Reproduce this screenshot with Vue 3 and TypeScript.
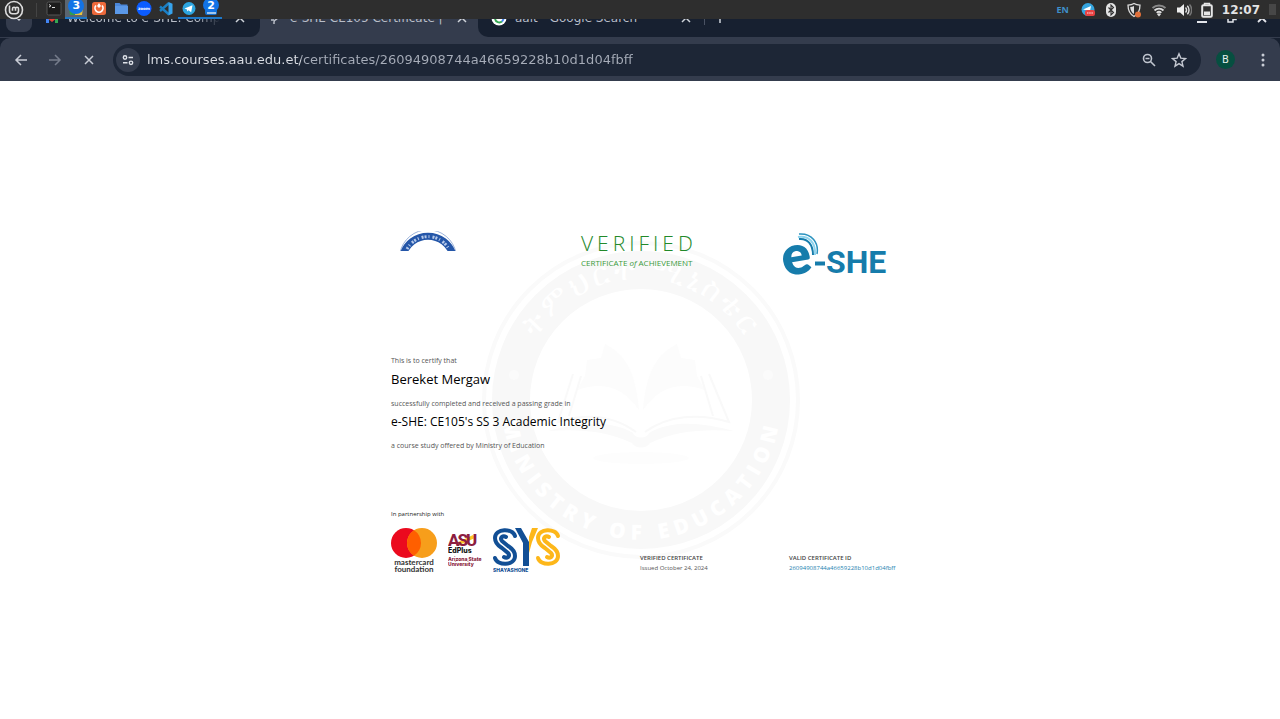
<script setup lang="ts">
import { ref } from 'vue'

const address = ref('lms.courses.aau.edu.et/certificates/26094908744a46659228b10d1d04fbff')
const certificateId = '26094908744a46659228b10d1d04fbff'
</script>

<template>
  <div class="desktop">
    <header class="panel">
      <button class="panel-btn mint" aria-label="Menu">
        <svg viewBox="0 0 20 20" width="20" height="20" fill="none" stroke="#dcdcdc">
          <circle cx="10" cy="10" r="8.500" stroke-width="1.600" />
          <path d="M5.500 5.500v5.200a3 3 0 0 0 3 3h3a3 3 0 0 0 3-3V8.800a1.500 1.500 0 0 0-3 0v2M11.500 10.500V8.800a1.500 1.500 0 0 0-3 0v2" stroke-width="1.600" />
        </svg>
      </button>
      <span class="panel-sep"></span>
      <nav class="tasks" aria-label="Running applications">
        <button class="panel-btn" aria-label="Terminal">
          <svg viewBox="0 0 22 19" width="22" height="19">
            <rect x="4" y="2" width="14" height="13" rx="1.500" fill="#1c1c1c" stroke="#555" />
            <path d="M6 4.500l2 1.300-2 1.300M9 7.500h3" stroke="#ddd" fill="none" />
          </svg>
        </button>
        <button class="panel-btn open focused" aria-label="Chrome, 3 windows">
          <svg viewBox="0 0 22 19" width="22" height="19">
            <path d="M4 8h7v7H5z" fill="#2f9e4f" /><path d="M11 8h7l-1 7h-7z" fill="#e9c23a" />
          </svg>
          <span class="badge">3</span>
        </button>
        <button class="panel-btn" aria-label="Postman">
          <svg viewBox="0 0 22 19" width="22" height="19">
            <rect x="4" y="2" width="14" height="13" rx="2.500" fill="#ee6a3b" />
            <path d="M8 5.500a4 4 0 1 0 6 0" fill="none" stroke="#fff" stroke-width="1.700" />
            <path d="M11 3l2 3-2 2-2-2z" fill="#fff" />
          </svg>
        </button>
        <button class="panel-btn" aria-label="Files">
          <svg viewBox="0 0 22 19" width="22" height="19">
            <path d="M5 3h4.500l1.500 1.500h6.500v9.500H5z" fill="#4a86d8" /><path d="M5 6h13v8H5z" fill="#5b98e6" />
          </svg>
        </button>
        <button class="panel-btn" aria-label="Zoom">
          <svg viewBox="0 0 22 19" width="22" height="19">
            <circle cx="11" cy="8.500" r="7.500" fill="#0b5cff" />
            <text x="11" y="10" text-anchor="middle" font-size="4" font-weight="700" fill="#fff">zoom</text>
          </svg>
        </button>
        <button class="panel-btn" aria-label="Visual Studio Code">
          <svg viewBox="0 0 22 19" width="22" height="19">
            <path d="M14 3L5 11M5 6.500l9 8" stroke="#1b7fc4" stroke-width="2.400" fill="none" />
            <path d="M13.500 2l4 1.800v9.800l-4 1.800z" fill="#36a3ec" />
          </svg>
        </button>
        <button class="panel-btn open" aria-label="Telegram">
          <svg viewBox="0 0 22 19" width="22" height="19">
            <circle cx="11" cy="8.500" r="6.500" fill="#2ca5e0" />
            <path d="M6.500 8.500l8-3.300-1.300 7-2.700-1.900-1.300 1.300-.2-2.200z" fill="#fff" />
          </svg>
        </button>
        <button class="panel-btn open" aria-label="Text editor, 2 windows">
          <svg viewBox="0 0 22 19" width="22" height="19">
            <rect x="5" y="4" width="12" height="11" rx="2" fill="#1670cf" />
            <path d="M7 13h9" stroke="#fff" stroke-width="1.200" />
          </svg>
          <span class="badge clear">2</span>
        </button>
      </nav>
      <div class="tray">
        <span class="lang">EN</span>
        <svg viewBox="0 0 16 16" width="16" height="16" role="img" aria-label="Telegram notifications">
          <circle cx="8" cy="7.500" r="6.500" fill="#35a5df" />
          <path d="M3 7.500l8-3.500-1 5z" fill="#fff" />
          <rect x="5" y="8" width="10" height="6" rx="2" fill="#ea4141" />
          <path d="M7 11h6" stroke="#f9b0b0" stroke-width="1.500" stroke-dasharray="1.500 .7" />
        </svg>
        <svg viewBox="0 0 12 16" width="12" height="16" role="img" aria-label="Bluetooth">
          <rect x="1" y="1" width="10" height="14" rx="5" fill="#e4e4e4" />
          <path d="M3.500 5.500l5 5L6 13V3l2.500 2.500-5 5" fill="none" stroke="#2e2e2e" stroke-width="1.100" />
        </svg>
        <svg viewBox="0 0 16 16" width="16" height="16" role="img" aria-label="Updates available">
          <path d="M8 1.500c2 1.300 4 1.600 6 1.600 0 5-1.500 9-6 11.400C3.500 12 2 8 2 3.100c2 0 4-.3 6-1.600z" fill="#2e2e2e" stroke="#ddd" stroke-width="1.300" />
          <path d="M8 4v8c-2.500-1.500-3.600-4-3.800-7 1.300 0 2.600-.3 3.800-1z" fill="#ddd" />
          <circle cx="12" cy="12.500" r="3" fill="#e2703a" />
        </svg>
        <svg viewBox="0 0 16 16" width="16" height="16" fill="none" stroke="#ddd" role="img" aria-label="Wi-Fi">
          <path d="M1.500 6a9.500 9.500 0 0 1 13 0" stroke="#8a8a8a" stroke-width="1.900" />
          <path d="M3.500 8.500a6.300 6.300 0 0 1 9 0M5.700 10.800a3.400 3.400 0 0 1 4.600 0" stroke-width="1.800" />
          <path d="M8 14.500l-2-2.300a3 3 0 0 1 4 0z" fill="#ddd" stroke="none" />
        </svg>
        <svg viewBox="0 0 16 16" width="16" height="16" fill="none" stroke="#ddd" role="img" aria-label="Volume">
          <path d="M1 5.500h3L8 2v12L4 10.500H1z" fill="#eee" stroke="none" />
          <path d="M9.500 5.500a3.500 3.500 0 0 1 0 5M11.300 3.800a6 6 0 0 1 0 8.400" stroke-width="1.500" />
          <path d="M13.500 2.500a8 8 0 0 1 0 11" stroke="#777" stroke-width="1.500" />
        </svg>
        <svg viewBox="0 0 12 16" width="12" height="16" fill="none" role="img" aria-label="Battery">
          <path d="M3.500 3V1.500h5V3" stroke="#e6e6e6" stroke-width="1.500" />
          <rect x="1.200" y="3.300" width="9.600" height="11.400" rx="1" stroke="#e6e6e6" stroke-width="2" />
          <rect x="3" y="9.500" width="6" height="3.700" fill="#e6e6e6" />
        </svg>
        <time class="clock">12:07</time>
        <span class="corner"></span>
      </div>
    </header>

    <section class="browser">
      <div class="tabstrip">
        <div class="tab first">
          <button class="tab-search" aria-label="Search tabs">
            <svg viewBox="0 0 12 12" width="12" height="12"><path d="M3 5l3 3 3-3" fill="none" stroke="#cfd3da" stroke-width="1.500" /></svg>
          </button>
          <svg class="fav" viewBox="0 0 14 14" width="14" height="14">
            <path d="M1 3v9h3V7z" fill="#4285f4" /><path d="M10 7v5h3V3z" fill="#34a853" /><path d="M1 3l6 5 6-5v3l-6 5-6-5z" fill="#ea4335" />
          </svg>
          <span class="tab-title fade">Welcome to e-SHE: Comp</span>
          <button class="tab-close" aria-label="Close tab"><svg viewBox="0 0 10 10" width="10" height="10"><path d="M1 1l8 8M9 1l-8 8" stroke="#cfd3da" stroke-width="1.500" /></svg></button>
        </div>
        <div class="tab active">
          <svg class="fav" viewBox="0 0 14 14" width="14" height="14" fill="none" stroke="#b9bec8">
            <path d="M4 3a4 4 0 0 1 6 3c0 3-4 2-4 5M3 9h3" stroke-width="1.500" /><circle cx="6" cy="12" r=".7" />
          </svg>
          <span class="tab-title">e-SHE CE105 Certificate |</span>
          <button class="tab-close" aria-label="Close tab"><svg viewBox="0 0 10 10" width="10" height="10"><path d="M1 1l8 8M9 1l-8 8" stroke="#cfd3da" stroke-width="1.500" /></svg></button>
        </div>
        <div class="tab last">
          <svg class="fav" viewBox="0 0 16 16" width="16" height="16" fill="none">
            <circle cx="8" cy="8" r="7.500" fill="#fff" />
            <path d="M4 9a4.500 4.500 0 0 0 7 2.500" stroke="#34a853" stroke-width="2" /><path d="M8.500 8h4a4.500 4.500 0 0 1-1.500 3.500" stroke="#4285f4" stroke-width="2" />
          </svg>
          <span class="tab-title">aait - Google Search</span>
          <button class="tab-close" aria-label="Close tab"><svg viewBox="0 0 10 10" width="10" height="10"><path d="M1 1l8 8M9 1l-8 8" stroke="#cfd3da" stroke-width="1.500" /></svg></button>
          <span class="tab-sep"></span>
          <button class="tab-close" aria-label="New tab"><svg viewBox="0 0 10 10" width="10" height="10"><path d="M5 0v10M0 5h10" stroke="#cfd3da" stroke-width="1.500" /></svg></button>
          <div class="win">
            <button aria-label="Minimize"><svg viewBox="0 0 10 10" width="10" height="10"><path d="M0 9h10" stroke="#e3e5ea" stroke-width="2" /></svg></button>
            <button aria-label="Restore"><svg viewBox="0 0 10 10" width="10" height="10" fill="none" stroke="#e3e5ea" stroke-width="1.500"><path d="M1 3h5v6H1zM3 1h6v5.500H6" /></svg></button>
            <button aria-label="Close"><svg viewBox="0 0 10 10" width="10" height="10"><path d="M1 1l8 8M9 1l-8 8" stroke="#e3e5ea" stroke-width="1.800" /></svg></button>
          </div>
        </div>
      </div>
      <div class="toolbar">
        <button class="tool" aria-label="Back"><svg viewBox="0 0 14 14" width="14" height="14" fill="none" stroke="#c9cdd6" stroke-width="1.500"><path d="M13 7H2M7 2L2 7l5 5" /></svg></button>
        <button class="tool" aria-label="Forward"><svg viewBox="0 0 14 14" width="14" height="14" fill="none" stroke="#757c8b" stroke-width="1.500"><path d="M1 7h11M7 2l5 5-5 5" /></svg></button>
        <button class="tool" aria-label="Stop loading"><svg viewBox="0 0 14 14" width="14" height="14" fill="none" stroke="#c9cdd6" stroke-width="1.500"><path d="M3 3l8 8M11 3l-8 8" /></svg></button>
        <div class="omnibox">
          <button class="site" aria-label="Site information">
            <svg viewBox="0 0 14 14" width="14" height="14" fill="none" stroke="#dfe2e8" stroke-width="1.400"><circle cx="4" cy="4.500" r="1.700" /><path d="M7.500 4.500H12M2 9.800h4.500" /><circle cx="10" cy="9.800" r="1.700" /></svg>
          </button>
          <input v-model="address" class="url" type="text" aria-label="Address" spellcheck="false" />
          <button class="omni-btn" aria-label="Zoom out"><svg viewBox="0 0 16 16" width="16" height="16" fill="none" stroke="#bfc4ce" stroke-width="1.600"><circle cx="6.500" cy="6.500" r="4" /><path d="M9.500 9.500l4.500 4.500M4.500 6.500h4" /></svg></button>
          <button class="omni-btn" aria-label="Bookmark"><svg viewBox="0 0 16 16" width="16" height="16" fill="none" stroke="#c5c9d2" stroke-width="1.400"><path d="M8 1.800l1.800 4.300 4.700.4-3.600 3.100 1.100 4.600L8 11.700l-4 2.500 1.100-4.600-3.600-3.100 4.700-.4z" /></svg></button>
        </div>
        <button class="avatar" aria-label="Profile">B</button>
        <button class="tool more" aria-label="More"><svg viewBox="0 0 4 16" width="4" height="16" fill="#c9cdd6"><circle cx="2" cy="3" r="1.500" /><circle cx="2" cy="8" r="1.500" /><circle cx="2" cy="13" r="1.500" /></svg></button>
      </div>
    </section>

    <main class="page">
      <article class="cert">
        <svg class="seal" viewBox="0 0 320 320" width="320" height="320" aria-hidden="true">
          <defs>
            <path id="sealTop" d="M39 160a121 121 0 0 1 242 0" />
            <path id="sealBottom" d="M20 160a140 140 0 0 0 280 0" />
          </defs>
          <circle cx="160" cy="160" r="157" fill="none" stroke="#fafafa" stroke-width="4" />
          <circle cx="160" cy="160" r="130" fill="none" stroke="#f8f8f8" stroke-width="38" />
          <text font-size="31" fill="#fff" letter-spacing="3"><textPath href="#sealTop" startOffset="50%" text-anchor="middle">ትምህርት ሚኒስቴር</textPath></text>
          <text font-size="21" font-weight="800" fill="#fff" letter-spacing="6"><textPath href="#sealBottom" startOffset="50%" text-anchor="middle">MINISTRY OF EDUCATION</textPath></text>
          <circle cx="33" cy="135" r="5" fill="#fbfbfb" />
          <circle cx="287" cy="135" r="5" fill="#fbfbfb" />
          <g fill="#fcfcfc">
            <path d="M104 136l2-16 14-2 4-14c20 10 31 28 34 66-14-20-32-30-62-20z" />
            <path d="M216 136l-2-16-14-2-4-14c-20 10-31 28-34 66 14-20 32-30 62-20z" />
          </g>
          <path d="M92 134l-15 48c28-9 55-7 78 10M228 134l20 48c-30-9-61-7-84 10M100 136l-12 40M220 136l12 40" fill="none" stroke="#f9f9f9" stroke-width="2" />
          <path d="M67 191c30-8 62-12 85 2 2 6 14 6 16 0 23-14 55-10 85-2-32-2-58 0-84 12-4 6-14 6-18 0-26-12-52-14-84-12z" fill="#fafafa" />
          <ellipse cx="160" cy="218" rx="48" ry="6" fill="#fdfdfd" />
        </svg>

        <header class="cert-head">
          <svg class="arch" viewBox="0 0 56 20" width="56" height="20" role="img" aria-label="Ministry of Education seal">
            <path d="M0 22a28.500 28.500 0 0 1 56 0" fill="none" stroke="#9db4dc" />
            <path d="M3 24a26 26 0 0 1 50 0" fill="none" stroke="#2456a8" stroke-width="7" />
            <path d="M7 18a24 24 0 0 1 42 0" fill="none" stroke="#b5c8e8" stroke-width="3" stroke-dasharray="2 2 1 3 2 1" />
          </svg>
          <div class="verified">
            <h1>VERIFIED</h1>
            <p>CERTIFICATE <em>of</em> ACHIEVEMENT</p>
          </div>
          <svg class="eshe" viewBox="0 0 106 46" width="106" height="46" role="img" aria-label="e-SHE">
            <text x="0" y="41" transform="rotate(-10 16 28)" font-size="55" font-weight="800" fill="#167cab" font-family="Lato, sans-serif">e</text>
            <g fill="none">
              <path d="M17 6c9-1 14 6 14 16" stroke="#167cab" stroke-width="2" />
              <path d="M16 4c11-2 18 6 17 18" stroke="#8fd4ee" stroke-width="2" />
              <path d="M17 1c13-1 20 9 18 20" stroke="#2b93bf" stroke-width="1.500" />
            </g>
            <path d="M33 30.500h10" stroke="#167cab" stroke-width="4" />
            <text x="44" y="40" font-size="32" font-weight="700" fill="#167cab" font-family="Roboto, sans-serif">SHE</text>
          </svg>
        </header>

        <section class="statement">
          <p class="small">This is to certify that</p>
          <h2 class="name">Bereket Mergaw</h2>
          <p class="small">successfully completed and received a passing grade in</p>
          <h2 class="course">e-SHE: CE105's SS 3 Academic Integrity</h2>
          <p class="small">a course study offered by Ministry of Education</p>
        </section>

        <footer class="cert-foot">
          <div class="partners">
            <p class="with">In partnership with</p>
            <div class="logos">
              <svg viewBox="0 0 48 46" width="48" height="46" role="img" aria-label="Mastercard Foundation" font-family="Lato, sans-serif">
                <circle cx="15" cy="15" r="15" fill="#eb0a1e" /><circle cx="31" cy="15" r="15" fill="#f79e1b" />
                <path d="M23 2.300a15 15 0 0 1 0 25.400a15 15 0 0 1 0-25.400z" fill="#ff5f00" />
                <text x="23" y="37" text-anchor="middle" font-size="8" font-weight="700" fill="#333">mastercard</text>
                <text x="23" y="44" text-anchor="middle" font-size="8" font-weight="700" fill="#333">foundation</text>
              </svg>
              <svg viewBox="0 0 36 46" width="36" height="46" role="img" aria-label="ASU EdPlus, Arizona State University">
                <path d="M8 15l17-8 2 3-18 8z" fill="#ffc627" />
                <text x="0" y="18" font-size="17" font-weight="800" font-family="Roboto, sans-serif" fill="#8c1d40" letter-spacing="-2">ASU</text>
                <text x="0" y="25" font-size="7" font-weight="800" fill="#111" font-family="Inter, sans-serif">EdPlus</text>
                <text x="0" y="33" font-size="5" font-weight="800" fill="#8c1d40" font-family="Inter, sans-serif">Arizona State</text>
                <text x="0" y="38" font-size="5" font-weight="800" fill="#8c1d40" font-family="Inter, sans-serif">University</text>
              </svg>
              <svg viewBox="0 0 70 46" width="70" height="46" role="img" aria-label="SYS Shayashone" fill="none" stroke-width="4" stroke-linecap="round">
                <g stroke="#124f95">
                  <path d="M22 8C20 0 2 0 2 10c0 6 4 8 7 10l6 5c3 3-1 6-4 4" />
                  <path d="M2 30C4 38 22 38 22 28c0-6-4-8-7-10l-6-5c-3-3 1-6 4-4" />
                </g>
                <path d="M22 0h6l8 14v24h-6V15z" fill="#124f95" />
                <path d="M39 0h6l-6 14-3 11V9z" fill="#fdb71a" />
                <g stroke="#fdb71a" transform="translate(43 0)">
                  <path d="M22 8C20 0 2 0 2 10c0 6 4 8 7 10l6 5c3 3-1 6-4 4" />
                  <path d="M2 30C4 38 22 38 22 28c0-6-4-8-7-10l-6-5c-3-3 1-6 4-4" />
                </g>
                <text x="0" y="44" font-size="5" font-weight="800" fill="#124f95" font-family="Inter, sans-serif">SHAYASHONE</text>
              </svg>
            </div>
          </div>
          <div class="meta">
            <h3>VERIFIED CERTIFICATE</h3>
            <p>Issued October 24, 2024</p>
          </div>
          <div class="meta">
            <h3>VALID CERTIFICATE ID</h3>
            <p><a :href="'#' + certificateId">{{ certificateId }}</a></p>
          </div>
        </footer>
      </article>
    </main>
  </div>
</template>

<style>
html, body { margin: 0; background: #fff; }
</style>

<style scoped>
.desktop { position: relative; min-height: 100vh; font-family: "DejaVu Sans", sans-serif; background: #fff; overflow: hidden; }
button { padding: 0; border: 0; background: none; font: inherit; color: inherit; display: flex; align-items: center; justify-content: center; flex: none; }
svg { display: block; flex: none; }
h1, h2, h3, p { margin: 0; font-weight: 400; }

.panel { position: absolute; top: 0; left: 0; right: 0; z-index: 2; height: 19px; display: flex; align-items: center; background: #2e2e2e; }
.mint { width: 28px; height: 19px; }
.panel-sep { width: 1px; height: 14px; margin: 0 6px 0 8px; background: #444; }
.tasks { width: 179px; display: flex; justify-content: space-between; }
.tasks .panel-btn { position: relative; width: 22px; height: 19px; box-sizing: border-box; }
.open { box-shadow: inset 0 -2px 0 #1e78c8; }
.focused { background: #5b6570; }
.badge { position: absolute; top: -2px; left: 3px; width: 16px; height: 16px; border-radius: 8px; background: #1273e6; color: #fff; font-size: 11px; line-height: 16px; font-weight: 700; text-align: center; }
.clear { height: 14px; }
.tray { margin-left: auto; padding-right: 4px; display: flex; align-items: center; gap: 9px; }
.lang { margin-right: 2px; font-size: 9px; line-height: 18px; font-weight: 700; font-family: "Noto Sans", sans-serif; color: #3f8fc9; }
.clock { font-size: 12px; line-height: 18px; font-weight: 700; color: #e4e4e4; }
.corner { width: 7px; height: 11px; background: #474747; }

.browser { background: #172030; }
.tabstrip { display: flex; height: 38px; background: #343c4d; }
.tab { display: flex; align-items: center; height: 37px; box-sizing: border-box; padding-bottom: 2px; color: #b9bec8; }
.tab-title { font-size: 12px; line-height: 16px; white-space: nowrap; margin-left: 8px; }
.tab-close { margin-left: auto; width: 14px; height: 14px; }
.first { width: 260px; padding-left: 6px; padding-right: 13px; background: #172030; border-bottom-right-radius: 10px; }
.first .fav { margin-left: 13px; }
.fade { -webkit-mask-image: linear-gradient(90deg, #000 85%, transparent); mask-image: linear-gradient(90deg, #000 85%, transparent); }
.tab-search { width: 26px; height: 28px; border-radius: 8px; background: #343c4d; }
.active { width: 218px; padding-left: 8px; padding-right: 9px; }
.last { flex: 1; padding-left: 13px; background: #172030; border-bottom-left-radius: 10px; }
.last .tab-close { margin-left: 42px; }
.last .tab-sep + .tab-close { margin-left: 8px; }
.tab-sep { width: 1px; height: 14px; margin-left: 11px; background: #4a5263; }
.win { margin-left: auto; margin-right: 3px; display: flex; }
.win button { width: 30px; height: 20px; }

.toolbar { display: flex; align-items: center; height: 43px; padding: 0 4px; box-sizing: border-box; background: #343c4d; border-radius: 10px 10px 0 0; }
.tool { width: 34px; height: 32px; }
.omnibox { flex: 1; display: flex; align-items: center; height: 32px; margin-left: 7px; padding: 0 12px 0 3px; border-radius: 16px; background: #1d2636; }
.site { width: 24px; height: 24px; border-radius: 12px; background: #343c4d; }
.url { flex: 1; min-width: 0; height: 24px; margin-left: 7px; padding: 0; border: 0; outline: 0; font: 13px/24px "DejaVu Sans", sans-serif; color: transparent; background: linear-gradient(90deg, #dcdfe5 154px, #a7adb9 154px); -webkit-background-clip: text; background-clip: text; }
.omni-btn { width: 20px; height: 24px; }
.omni-btn + .omni-btn { margin-left: 10px; }
.avatar { width: 19px; height: 19px; margin: 0 15px 0 15px; border-radius: 10px; background: #064f40; color: #e6efec; font-size: 10px; }
.more { width: 26px; }

.page { display: flex; justify-content: center; padding: 150px 20px 100px; }
.cert { position: relative; width: 498px; font-family: "Open Sans", sans-serif; color: #555; }
.seal { position: absolute; top: 9px; left: 90px; z-index: 0; font-family: "Open Sans", sans-serif; }
.cert-head, .statement, .cert-foot { position: relative; z-index: 1; }
.cert-head { display: grid; grid-template-columns: 190px 1fr 107px; align-items: start; }
.arch { margin-left: 9px; }
.verified { color: #3a9a3c; }
.verified h1 { font-size: 21px; line-height: 24px; font-weight: 300; letter-spacing: 4px; color: #23892a; }
.verified p { font-size: 8px; line-height: 16px; font-weight: 400; }
.eshe { margin-top: 2px; }
.statement { margin-top: 77px; }
.small { font-size: 7px; line-height: 10px; }
.name, .course { color: #000; line-height: 18px; margin: 4px 0 10px; }
.name { font-size: 13px; margin-bottom: 11px; }
.course { font-size: 12px; }
.cert-foot { display: grid; grid-template-columns: 249px 149px auto; align-items: end; margin-top: 58px; }
.with { font-size: 6px; line-height: 10px; color: #222; }
.logos { display: flex; gap: 9px; margin-top: 9px; }
.meta { font-size: 6px; line-height: 10px; padding-bottom: 1px; }
.meta h3 { font-size: 6px; line-height: 10px; font-weight: 600; color: #444; }
.meta a { color: #1c7fb0; text-decoration: none; }
</style>
